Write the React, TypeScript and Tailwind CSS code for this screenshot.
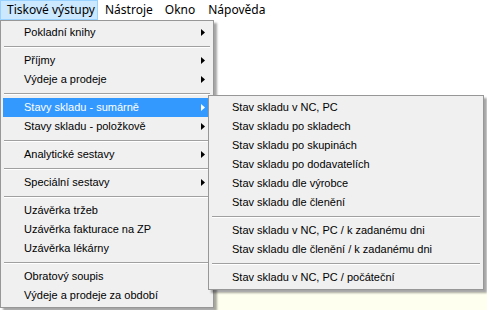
import React from "react";

type Entry = { label?: string; sep?: boolean; arrow?: boolean; active?: boolean };

const mainItems: Entry[] = [
  { label: "Pokladní knihy", arrow: true },
  { sep: true },
  { label: "Příjmy", arrow: true },
  { label: "Výdeje a prodeje", arrow: true },
  { sep: true },
  { label: "Stavy skladu - sumárně", arrow: true, active: true },
  { label: "Stavy skladu - položkově", arrow: true },
  { sep: true },
  { label: "Analytické sestavy", arrow: true },
  { sep: true },
  { label: "Speciální sestavy", arrow: true },
  { sep: true },
  { label: "Uzávěrka tržeb" },
  { label: "Uzávěrka fakturace na ZP" },
  { label: "Uzávěrka lékárny" },
  { sep: true },
  { label: "Obratový soupis" },
  { label: "Výdeje a prodeje za období" },
];

const subItems: Entry[] = [
  { label: "Stav skladu v NC, PC" },
  { label: "Stav skladu po skladech" },
  { label: "Stav skladu po skupinách" },
  { label: "Stav skladu po dodavatelích" },
  { label: "Stav skladu dle výrobce" },
  { label: "Stav skladu dle členění" },
  { sep: true },
  { label: "Stav skladu v NC, PC / k zadanému dni" },
  { label: "Stav skladu dle členění / k zadanému dni" },
  { sep: true },
  { label: "Stav skladu v NC, PC / počáteční" },
];

function Arrow({ white }: { white?: boolean }) {
  return (
    <svg width="4" height="7" viewBox="0 0 4 7" className="absolute right-[6px] top-[6px]">
      <path d="M0 0 L4 3.5 L0 7 Z" fill={white ? "#ffffff" : "#000000"} />
    </svg>
  );
}

function MenuList({ items }: { items: Entry[] }) {
  return (
    <div className="flex flex-col">
      {items.map((it, i) =>
        it.sep ? (
          <div key={i} className="h-[9px] flex flex-col justify-center px-[1px]">
            <div className="h-px bg-[#a0a0a0]" />
            <div className="h-px bg-white" />
          </div>
        ) : (
          <div
            key={i}
            className={
              "relative h-[19px] flex items-center pl-[21px] whitespace-nowrap " +
              (it.active ? "bg-[#3399ff] text-white" : "text-black")
            }
          >
            {it.label}
            {it.arrow && <Arrow white={it.active} />}
          </div>
        )
      )}
    </div>
  );
}

export default function App() {
  return (
    <div className="relative w-[487px] h-[310px] bg-white overflow-hidden">
      <div className="absolute left-[214px] top-[292px] w-[273px] h-[18px] bg-[#fffff0]" />
      <div
        className="flex items-center h-[20px] text-[12px] text-black bg-white"
        style={{ fontFamily: '"Noto Sans", "Liberation Sans", sans-serif' }}
      >
        <div className="h-[20px] w-[98px] flex items-center pl-[6px] bg-[#cce8ff] border border-[#99d1ff]">
          Tiskové výstupy
        </div>
        <div className="pl-[7px]">Nástroje</div>
        <div className="pl-[12px]">Okno</div>
        <div className="pl-[13px]">Nápověda</div>
      </div>

      <div
        className="absolute left-0 top-[20px] w-[214px] border border-[#979797] bg-[#f0f0f0] p-[2px] text-[11px] shadow-[3px_3px_2px_rgba(0,0,0,0.35)]"
        style={{ fontFamily: '"Liberation Sans", Arial, sans-serif' }}
      >
        <MenuList items={mainItems} />
      </div>

      <div
        className="absolute left-[208px] top-[95px] w-[276px] border border-[#979797] bg-[#f0f0f0] p-[2px] text-[11px] shadow-[3px_3px_2px_rgba(0,0,0,0.35)]"
        style={{ fontFamily: '"Liberation Sans", Arial, sans-serif' }}
      >
        <MenuList items={subItems} />
      </div>
    </div>
  );
}
